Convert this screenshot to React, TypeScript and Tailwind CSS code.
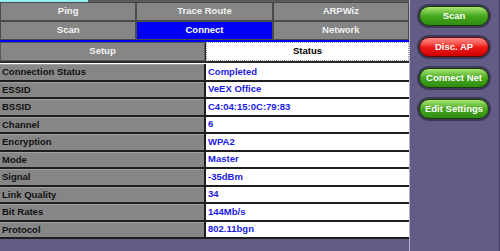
import React from 'react';

const rows: [string, string][] = [
  ['Connection Status', 'Completed'],
  ['ESSID', 'VeEX Office'],
  ['BSSID', 'C4:04:15:0C:79:83'],
  ['Channel', '6'],
  ['Encryption', 'WPA2'],
  ['Mode', 'Master'],
  ['Signal', '-35dBm'],
  ['Link Quality', '34'],
  ['Bit Rates', '144Mb/s'],
  ['Protocol', '802.11bgn'],
];

const Tab: React.FC<{ label: string; active?: boolean }> = ({ label, active }) => (
  <div
    className={`flex-1 flex items-center justify-center border border-[#4a4a4a] text-[9.5px] font-bold ${
      active ? 'bg-[#0000f6] text-white' : 'bg-[#868686] text-[#f2f2f2]'
    }`}
  >
    {label}
  </div>
);

const PillButton: React.FC<{ label: string; red?: boolean }> = ({ label, red }) => (
  <div className="rounded-full bg-[#3d3a55] p-[2px]">
    <div
      className={`h-[20px] rounded-full flex items-center justify-center text-[9.5px] font-bold text-white border ${
        red
          ? 'border-[#5a0a0a] bg-gradient-to-b from-[#ff8a8a] via-[#f01a1a] to-[#d00000]'
          : 'border-[#1c3a0e] bg-gradient-to-b from-[#a8e870] via-[#45a81c] to-[#2f8c12]'
      }`}
    >
      {label}
    </div>
  </div>
);

export default function App() {
  return (
    <div
      className="w-[500px] h-[251px] flex bg-[#625c86] overflow-hidden"
      style={{ fontFamily: '"Liberation Sans", Arial, sans-serif' }}
    >
      {/* Main panel */}
      <div className="w-[409px] flex flex-col">
        <div className="h-[2px] flex">
          <div className="w-[88px] bg-[#8ff0f4]" />
          <div className="flex-1 bg-[#5a5a5a]" />
        </div>

        {/* Tabs */}
        <div className="flex h-[19px] bg-[#868686]">
          <Tab label="Ping" />
          <Tab label="Trace Route" />
          <Tab label="ARPWiz" />
        </div>
        <div className="flex h-[19px] bg-[#868686]">
          <Tab label="Scan" />
          <Tab label="Connect" active />
          <Tab label="Network" />
        </div>
        <div className="h-[2px] bg-[#0000f6]" />

        {/* Setup / Status */}
        <div className="flex h-[19px] bg-[#2a2a2a] gap-px">
          <div className="w-[205px] flex items-center justify-center bg-[#868686] border border-[#5a5a5a] text-[9.5px] font-bold text-[#f2f2f2]">
            Setup
          </div>
          <div className="flex-1 flex items-center justify-center bg-white border border-dotted border-[#9a9a9a] text-[9.5px] font-bold text-black">
            Status
          </div>
        </div>
        <div className="h-[2px] bg-[#2a2a2a]" />
        <div className="h-px bg-white" />

        {/* Status table */}
        <div className="flex flex-col bg-[#1e1e1e]">
          {rows.map(([label, value]) => (
            <div key={label} className="flex h-[17.5px] border-b-2 border-[#1e1e1e] gap-[2px]">
              <div className="w-[204px] flex items-center pl-[2px] bg-[#868686] border-t border-[#a0a0a0] text-[9.5px] font-bold text-[#111]">
                {label}
              </div>
              <div className="flex-1 flex items-center pl-[2px] bg-white text-[9.5px] font-bold text-[#1a1ae6]">
                {value}
              </div>
            </div>
          ))}
        </div>
        <div className="flex-1 bg-[#625c86]" />
      </div>

      {/* Side bar */}
      <div className="w-px bg-[#b7b3cc]" />
      <div className="flex-1 flex flex-col gap-[7px] pl-[7px] pr-[8px] pt-[4px] border-r border-[#403a60]">
        <PillButton label="Scan" />
        <PillButton label="Disc. AP" red />
        <PillButton label="Connect Net" />
        <PillButton label="Edit Settings" />
      </div>
    </div>
  );
}
